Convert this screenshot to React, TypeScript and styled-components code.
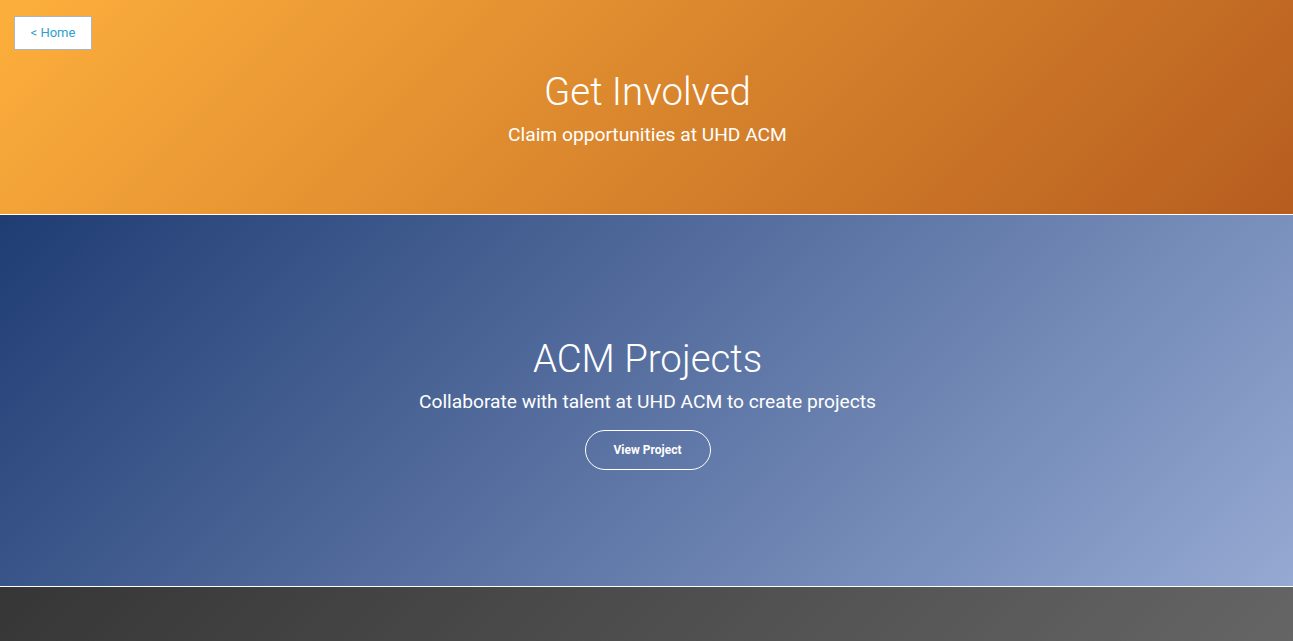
import React from "react";
import styled, { createGlobalStyle } from "styled-components";

const Global = createGlobalStyle`
  html, body { margin: 0; padding: 0; }
  body { font-family: Roboto, "Liberation Sans", Arial, sans-serif; background: #555; overflow: hidden; }
  * { box-sizing: border-box; }
`;

const Page = styled.div`
  display: flex;
  flex-direction: column;
  width: 100%;
`;

const Section = styled.section<{ $bg: string; $h: number }>`
  position: relative;
  flex: none;
  height: ${(p) => p.$h}px;
  padding-left: 2px;
  background: ${(p) => p.$bg};
  border-bottom: 1px solid #ffffff;
  display: flex;
  flex-direction: column;
  align-items: center;
  justify-content: center;
  color: #ffffff;
  text-align: center;
`;

const HomeButton = styled.a`
  position: absolute;
  top: 16px;
  left: 14px;
  width: 78px;
  height: 34px;
  display: flex;
  align-items: center;
  justify-content: center;
  padding-bottom: 1px;
  background: #ffffff;
  border: 1px solid #aab5c2;
  color: #2b9fd0;
  font-size: 13px;
  text-decoration: none;
  cursor: pointer;
`;

const Title = styled.h1`
  margin: 0;
  font-size: 38.4px;
  line-height: 52px;
  font-weight: 300;
`;

const Subtitle = styled.p`
  margin: 4px 0 0;
  font-size: 19.2px;
  line-height: 26px;
  font-weight: 400;
`;

const OutlineButton = styled.button`
  margin-top: 15px;
  margin-bottom: -1px;
  width: 126px;
  height: 40px;
  border: 1px solid #ffffff;
  border-radius: 20px;
  background: transparent;
  color: #ffffff;
  font-family: Roboto, "Liberation Sans", Arial, sans-serif;
  font-weight: 700;
  font-size: 12px;
  cursor: pointer;
`;

export default function App() {
  return (
    <>
      <Global />
      <Page>
        <Section $h={215} $bg="linear-gradient(135deg, #fdaf3c 0%, #b65d1f 100%)">
          <HomeButton>&lt; Home</HomeButton>
          <Title>Get Involved</Title>
          <Subtitle>Claim opportunities at UHD ACM</Subtitle>
        </Section>
        <Section $h={372} $bg="linear-gradient(135deg, #1f3c73 0%, #95a9d2 100%)">
          <Title>ACM Projects</Title>
          <Subtitle>Collaborate with talent at UHD ACM to create projects</Subtitle>
          <OutlineButton>View Project</OutlineButton>
        </Section>
        <Section $h={372} $bg="linear-gradient(135deg, #363636 0%, #707070 100%)" />
      </Page>
    </>
  );
}
